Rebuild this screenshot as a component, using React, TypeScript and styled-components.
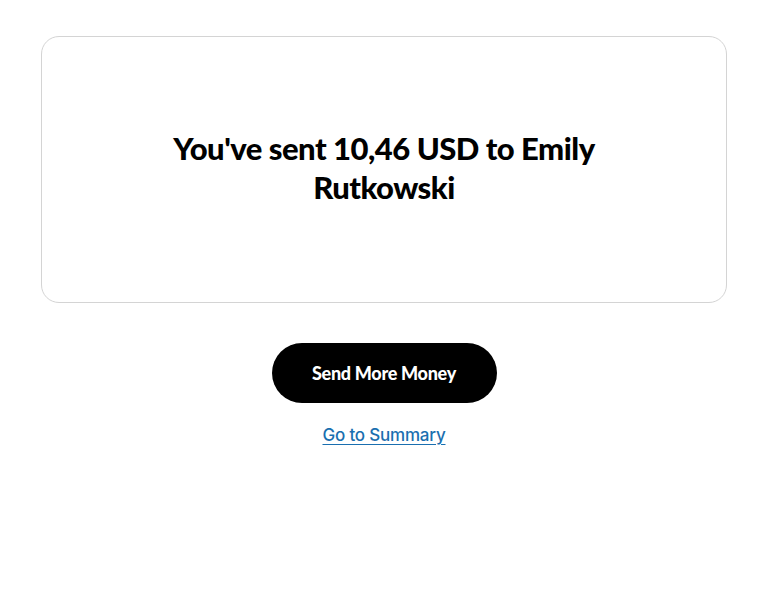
import React from "react";
import styled, { createGlobalStyle } from "styled-components";

const Global = createGlobalStyle`
  html, body { margin: 0; padding: 0; background: #ffffff; }
  body { font-family: "Lato", "Noto Sans", sans-serif; color: #000; }
`;

const Page = styled.main`
  display: flex;
  flex-direction: column;
  align-items: center;
  padding: 36px 40px 0 41px;
`;

const Card = styled.section`
  box-sizing: border-box;
  width: 100%;
  height: 267px;
  border: 1px solid #d4d4d4;
  border-radius: 18px;
  display: flex;
  align-items: center;
  justify-content: center;
  padding: 0 24px 4px;
`;

const Heading = styled.h1`
  margin: 0;
  max-width: 450px;
  text-align: center;
  font-family: "Lato", sans-serif;
  font-weight: 900;
  font-size: 31px;
  line-height: 39px;
  letter-spacing: -0.5px;
  color: #000;
`;

const Actions = styled.div`
  display: flex;
  flex-direction: column;
  align-items: center;
  margin-top: 40px;
  gap: 22px;
`;

const PrimaryButton = styled.button`
  width: 225px;
  height: 60px;
  border: none;
  border-radius: 30px;
  background: #000;
  color: #fff;
  font-family: "Lato", sans-serif;
  font-weight: 900;
  font-size: 18px;
  letter-spacing: -0.3px;
  cursor: pointer;
`;

const SummaryLink = styled.a`
  font-family: "Inter", "Noto Sans", sans-serif;
  font-weight: 500;
  font-size: 17px;
  letter-spacing: -0.2px;
  color: #1a6fb0;
  text-decoration: underline;
  text-underline-offset: 3px;
  cursor: pointer;
`;

export default function App() {
  return (
    <>
      <Global />
      <Page>
        <Card>
          <Heading>You've sent 10,46 USD to Emily Rutkowski</Heading>
        </Card>
        <Actions>
          <PrimaryButton>Send More Money</PrimaryButton>
          <SummaryLink href="#">Go to Summary</SummaryLink>
        </Actions>
      </Page>
    </>
  );
}
